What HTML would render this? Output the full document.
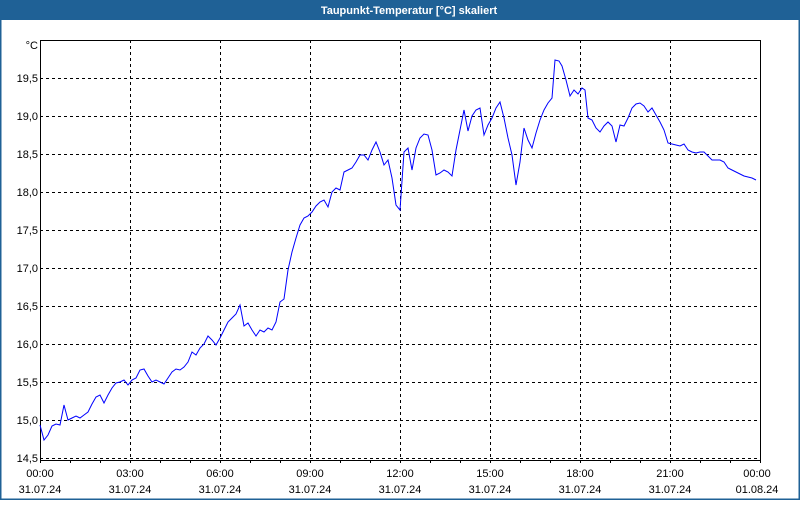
<!DOCTYPE html>
<html><head><meta charset="utf-8"><style>
html,body{margin:0;padding:0;background:#fff;}
body{width:800px;height:500px;overflow:hidden;}
</style></head><body>
<svg width="800" height="500" xmlns="http://www.w3.org/2000/svg" font-family="'Liberation Sans',sans-serif" font-size="11">
<rect x="0" y="0" width="800" height="500" fill="#fff"/>
<rect x="0.5" y="0.5" width="799" height="499" fill="none" stroke="#1f6196" stroke-width="2"/>
<rect x="0" y="0" width="800" height="20" fill="#1f6196"/>
<text x="409" y="14" fill="#fff" font-weight="bold" font-size="11" text-anchor="middle">Taupunkt-Temperatur [°C] skaliert</text>
<g stroke="#000" stroke-dasharray="3,3" stroke-width="1">
<line x1="40" y1="78.5" x2="760" y2="78.5"/><line x1="40" y1="116.5" x2="760" y2="116.5"/>
<line x1="40" y1="154.5" x2="760" y2="154.5"/><line x1="40" y1="192.5" x2="760" y2="192.5"/>
<line x1="40" y1="230.5" x2="760" y2="230.5"/><line x1="40" y1="268.5" x2="760" y2="268.5"/>
<line x1="40" y1="306.5" x2="760" y2="306.5"/><line x1="40" y1="344.5" x2="760" y2="344.5"/>
<line x1="40" y1="382.5" x2="760" y2="382.5"/><line x1="40" y1="420.5" x2="760" y2="420.5"/>
<line x1="40" y1="458.5" x2="760" y2="458.5"/>
<line x1="130.5" y1="40" x2="130.5" y2="460"/><line x1="220.5" y1="40" x2="220.5" y2="460"/>
<line x1="310.5" y1="40" x2="310.5" y2="460"/><line x1="400.5" y1="40" x2="400.5" y2="460"/>
<line x1="490.5" y1="40" x2="490.5" y2="460"/><line x1="580.5" y1="40" x2="580.5" y2="460"/>
<line x1="670.5" y1="40" x2="670.5" y2="460"/>
</g>
<path d="M40.5 460.5V40.5H760.5V460.5H40.5" fill="none" stroke="#000"/>
<g stroke="#000">
<path d="M70.5 460v3M100.5 460v3M130.5 460v3M160.5 460v3M190.5 460v3M220.5 460v3M250.5 460v3M280.5 460v3M310.5 460v3M340.5 460v3M370.5 460v3M400.5 460v3M430.5 460v3M460.5 460v3M490.5 460v3M520.5 460v3M550.5 460v3M580.5 460v3M610.5 460v3M640.5 460v3M670.5 460v3M700.5 460v3M730.5 460v3M760.5 460v3M40.5 460v3"/>
</g>
<g text-anchor="end" fill="#000">
<text x="38" y="49">°C</text>
<text x="38" y="82">19,5</text><text x="38" y="120">19,0</text><text x="38" y="158">18,5</text>
<text x="38" y="196">18,0</text><text x="38" y="234">17,5</text><text x="38" y="272">17,0</text>
<text x="38" y="310">16,5</text><text x="38" y="348">16,0</text><text x="38" y="386">15,5</text>
<text x="38" y="424">15,0</text><text x="38" y="462">14,5</text>
</g>
<g text-anchor="middle" fill="#000">
<text x="40" y="477">00:00</text><text x="130" y="477">03:00</text><text x="220" y="477">06:00</text>
<text x="310" y="477">09:00</text><text x="400" y="477">12:00</text><text x="490" y="477">15:00</text>
<text x="580" y="477">18:00</text><text x="670" y="477">21:00</text><text x="757" y="477">00:00</text>
<text x="40" y="493">31.07.24</text><text x="130" y="493">31.07.24</text><text x="220" y="493">31.07.24</text>
<text x="310" y="493">31.07.24</text><text x="400" y="493">31.07.24</text><text x="490" y="493">31.07.24</text>
<text x="580" y="493">31.07.24</text><text x="670" y="493">31.07.24</text><text x="757" y="493">01.08.24</text>
</g>
<polyline fill="none" stroke="#0000ff" stroke-width="1" points="40,425 44,440 48,435 52,426 56,424 60,425 64,405 68,420 72,418 76,416 80,418 84,415 88,412 92,404 96,397 100,395 104,403 108,395 112,388 116,383 120,382 124,380 128,385 132,380 136,378 140,370 144,369 148,376 152,382 156,380 160,382 164,384 168,378 172,372 176,369 180,370 184,367 188,362 192,352 196,355 200,348 204,344 208,336 212,340 216,345 220,338 224,330 228,322 232,318 236,314 240,305 244,326 248,323 252,330 256,336 260,330 264,332 268,328 272,330 276,322 280,302 284,299 288,270 292,252 296,238 300,225 304,218 308,216 312,212 316,206 320,202 324,200 328,207 332,192 336,188 340,190 344,172 348,170 352,168 356,162 360,155 364,155 368,160 372,150 376,142 380,152 384,165 388,160 392,178 396,205 400,210 404,152 408,148 412,170 416,148 420,138 424,134 428,135 432,150 436,175 440,173 444,170 448,172 452,176 456,150 460,130 464,110 468,131 472,116 476,110 480,108 484,135 488,125 492,118 496,108 500,102 504,118 508,138 512,155 516,185 520,162 524,128 528,140 532,148 536,133 540,120 544,110 548,103 552,98 555,60 559,61 562,66 566,80 570,96 574,90 578,94 582,88 585,90 588,118 592,120 596,128 600,132 604,126 608,122 612,126 616,142 620,125 624,126 628,118 632,108 636,104 640,103 644,106 648,112 652,108 656,115 660,122 664,130 668,143 672,144 676,145 680,146 684,144 688,150 692,152 696,153 700,152 704,152 708,156 712,160 716,160 720,160 724,162 728,168 732,170 736,172 740,174 744,176 748,177 752,178 756,180"/>
</svg>
</body></html>
